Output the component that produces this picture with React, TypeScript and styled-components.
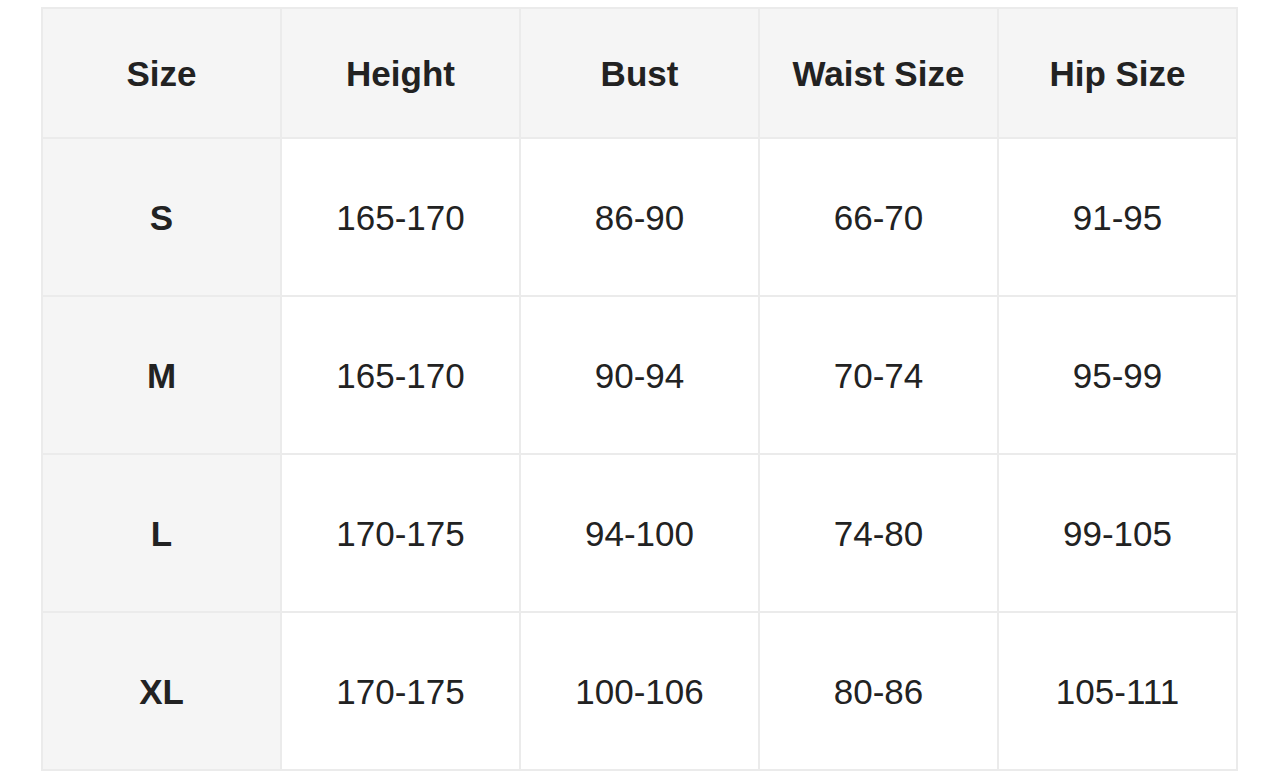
import React from "react";
import styled, { createGlobalStyle } from "styled-components";

const GlobalStyle = createGlobalStyle`
  html, body { margin: 0; padding: 0; background: #ffffff; }
  body { font-family: "Liberation Sans", Arial, Helvetica, sans-serif; }
`;

const Page = styled.div`
  padding: 7px 0 0 41px;
`;

const Grid = styled.div`
  display: grid;
  grid-template-columns: repeat(5, 237px);
  grid-template-rows: 128px repeat(4, 156px);
  gap: 2px;
  padding: 2px;
  background: #ebebeb;
  width: max-content;
`;

const Cell = styled.div<{ $head?: boolean }>`
  display: flex;
  align-items: center;
  justify-content: center;
  background: ${(p) => (p.$head ? "#f5f5f5" : "#ffffff")};
  color: #222222;
  font-size: 35px;
  font-weight: ${(p) => (p.$head ? 700 : 400)};
  line-height: 1;
`;

const headers = ["Size", "Height", "Bust", "Waist Size", "Hip Size"];
const rows = [
  ["S", "165-170", "86-90", "66-70", "91-95"],
  ["M", "165-170", "90-94", "70-74", "95-99"],
  ["L", "170-175", "94-100", "74-80", "99-105"],
  ["XL", "170-175", "100-106", "80-86", "105-111"],
];

export default function App() {
  return (
    <>
      <GlobalStyle />
      <Page>
        <Grid>
          {headers.map((h) => (
            <Cell key={h} $head>
              {h}
            </Cell>
          ))}
          {rows.map((r) =>
            r.map((v, i) => (
              <Cell key={r[0] + i} $head={i === 0}>
                {v}
              </Cell>
            ))
          )}
        </Grid>
      </Page>
    </>
  );
}
